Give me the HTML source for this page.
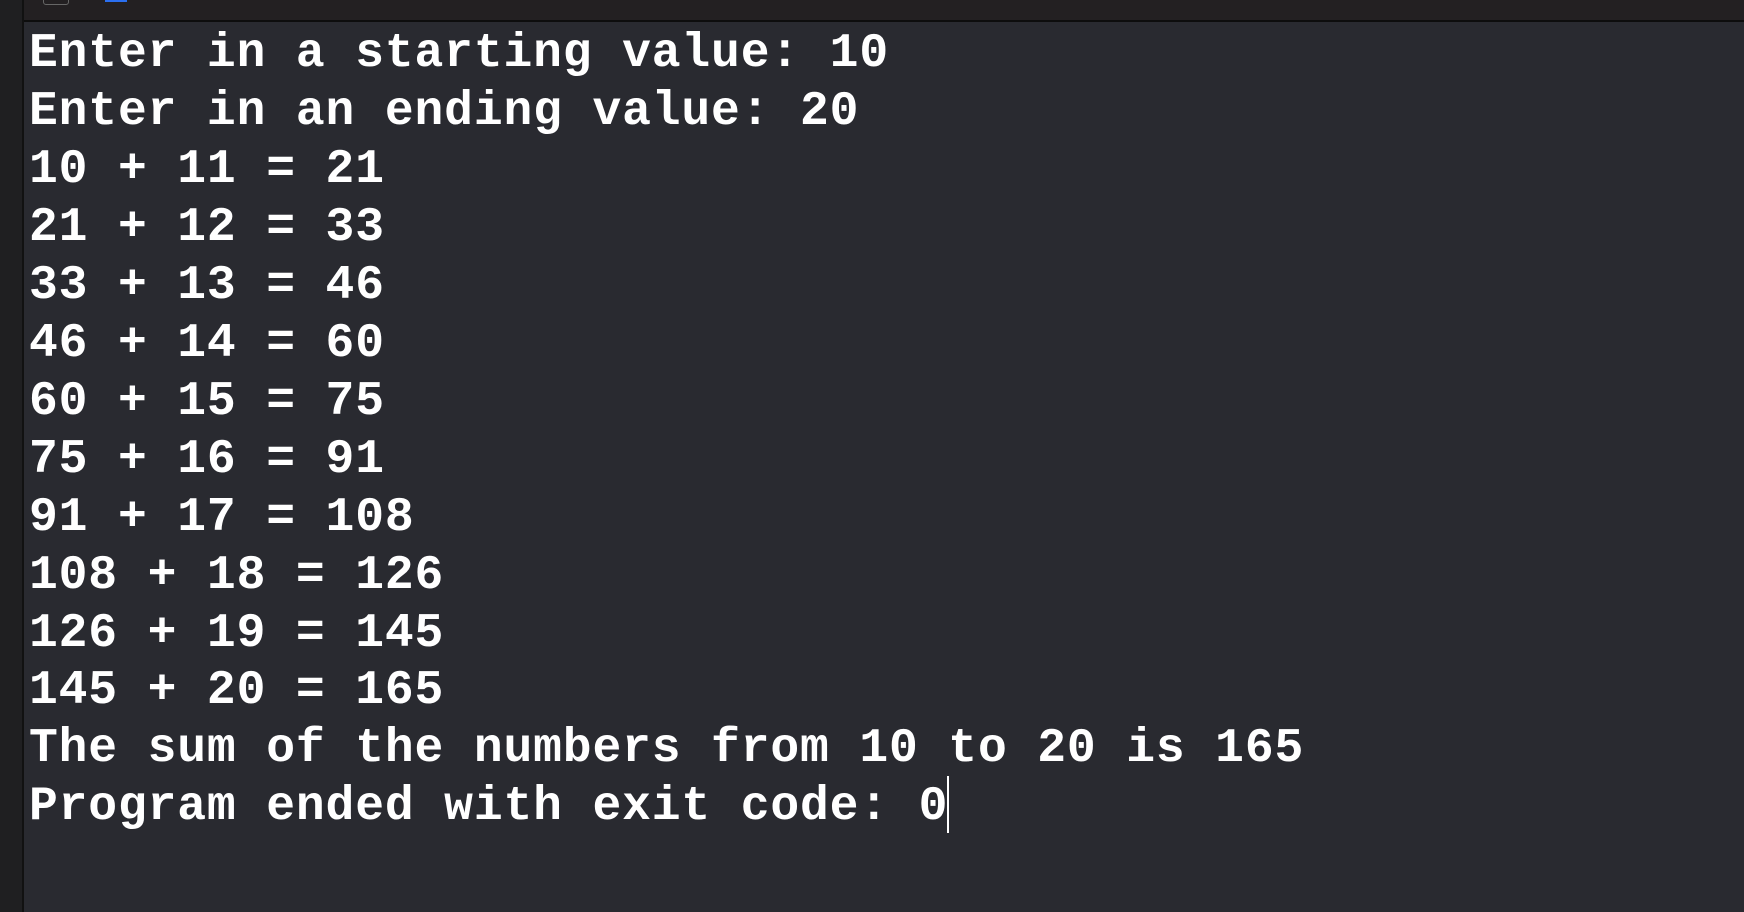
<!DOCTYPE html>
<html><head><meta charset="utf-8"><style>
html,body{margin:0;padding:0;width:1744px;height:912px;overflow:hidden;background:#292a30;}
.top{position:absolute;left:0;top:0;width:1744px;height:20px;background:#232022;border-bottom:2px solid #0d0d0d;}
.left{position:absolute;left:0;top:0;width:22px;height:912px;background:#1f1f21;border-right:2px solid #111;}
.chk{position:absolute;left:43px;top:-8px;width:24px;height:11px;border:1.5px solid #666;border-radius:3px;}
.blue{position:absolute;left:105px;top:0;width:22px;height:2px;background:#2b6ff0;}
pre{position:absolute;left:29px;top:26px;margin:0;font-family:"Liberation Mono",monospace;font-weight:bold;font-size:48px;letter-spacing:0.85px;line-height:57.95px;color:#fff;}
.cur{position:absolute;left:947px;top:776px;width:2px;height:57px;background:#fff;}
</style></head><body>
<div class="top"><div class="chk"></div><div class="blue"></div></div>
<div class="left"></div>
<pre>Enter in a starting value: 10
Enter in an ending value: 20
10 + 11 = 21
21 + 12 = 33
33 + 13 = 46
46 + 14 = 60
60 + 15 = 75
75 + 16 = 91
91 + 17 = 108
108 + 18 = 126
126 + 19 = 145
145 + 20 = 165
The sum of the numbers from 10 to 20 is 165
Program ended with exit code: 0</pre>
<div class="cur"></div>
</body></html>
